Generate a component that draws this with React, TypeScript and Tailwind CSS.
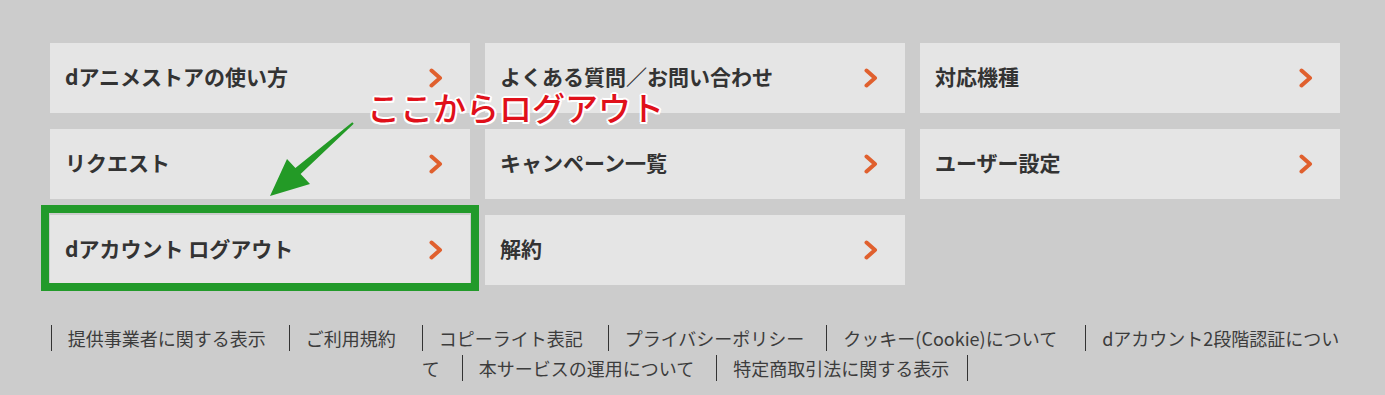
import React from "react";

const items: string[] = [
  "dアニメストアの使い方",
  "よくある質問／お問い合わせ",
  "対応機種",
  "リクエスト",
  "キャンペーン一覧",
  "ユーザー設定",
  "dアカウント ログアウト",
  "解約",
];

function Chevron() {
  return (
    <svg width="14" height="20" viewBox="0 0 14 20" className="shrink-0">
      <polyline
        points="2.5,2.5 11,10 2.5,17.5"
        fill="none"
        stroke="#e0602e"
        strokeWidth="4"
        strokeLinecap="round"
        strokeLinejoin="round"
      />
    </svg>
  );
}

const font = "font-['Noto_Sans_CJK_JP','Noto_Sans',sans-serif]";

export default function App() {
  return (
    <div className={`relative w-[1385px] h-[395px] overflow-hidden bg-[#cccccc] ${font}`}>
      <div className="ml-[50px] w-[1290px] pt-[43px]">
        <div className="grid grid-cols-[420px_420px_420px] auto-rows-[70px] gap-x-[15px] gap-y-[16px]">
          {items.map((t) => (
            <div
              key={t}
              className="flex items-center justify-between bg-[#e5e5e5] pl-[15px] pr-[27px]"
            >
              <span className="text-[21px] font-bold text-[#333333] leading-none -mt-[3px]">{t}</span>
              <Chevron />
            </div>
          ))}
        </div>

        <div className="mt-[38px] text-center whitespace-nowrap text-[18px] leading-[30px] text-[#3c3c3c]">
          <span className="border-l border-[#333333] pl-[16px] pr-[23px]">提供事業者に関する表示</span>
          <span className="border-l border-[#333333] pl-[16px] pr-[26px]">ご利用規約</span>
          <span className="border-l border-[#333333] pl-[16px] pr-[25px]">コピーライト表記</span>
          <span className="border-l border-[#333333] pl-[16px] pr-[22px]">プライバシーポリシー</span>
          <span className="border-l border-[#333333] pl-[16px] pr-[28px]">クッキー(Cookie)について</span>
          <span className="border-l border-[#333333] pl-[16px] pr-[22px]">
            dアカウント2段階認証につい
            <br />て
          </span>
          <span className="border-l border-[#333333] pl-[16px] pr-[22px]">本サービスの運用について</span>
          <span className="border-l border-r border-[#333333] pl-[16px] pr-[18px]">特定商取引法に関する表示</span>
        </div>
      </div>

      {/* annotation: highlight box */}
      <div className="absolute left-[41px] top-[205px] w-[438px] h-[86px] border-[8px] border-[#229a2a] pointer-events-none" />

      {/* annotation: arrow */}
      <svg
        className="absolute left-0 top-0 pointer-events-none"
        width="1385"
        height="395"
        viewBox="0 0 1385 395"
      >
        <polygon
          points="352.3,122.2 295.4,168 287,159 270,196 310,184 300.6,174 353.7,123.8"
          fill="#239a26"
        />
      </svg>

      {/* annotation: text */}
      <div className="absolute left-[367px] top-[91px] text-[33px] font-medium leading-none text-[#e0101a] [text-shadow:2px_0_0_#fff,-2px_0_0_#fff,0_2px_0_#fff,0_-2px_0_#fff,1.5px_1.5px_0_#fff,-1.5px_1.5px_0_#fff,1.5px_-1.5px_0_#fff,-1.5px_-1.5px_0_#fff] pointer-events-none whitespace-nowrap">
        ここからログアウト
      </div>
    </div>
  );
}
